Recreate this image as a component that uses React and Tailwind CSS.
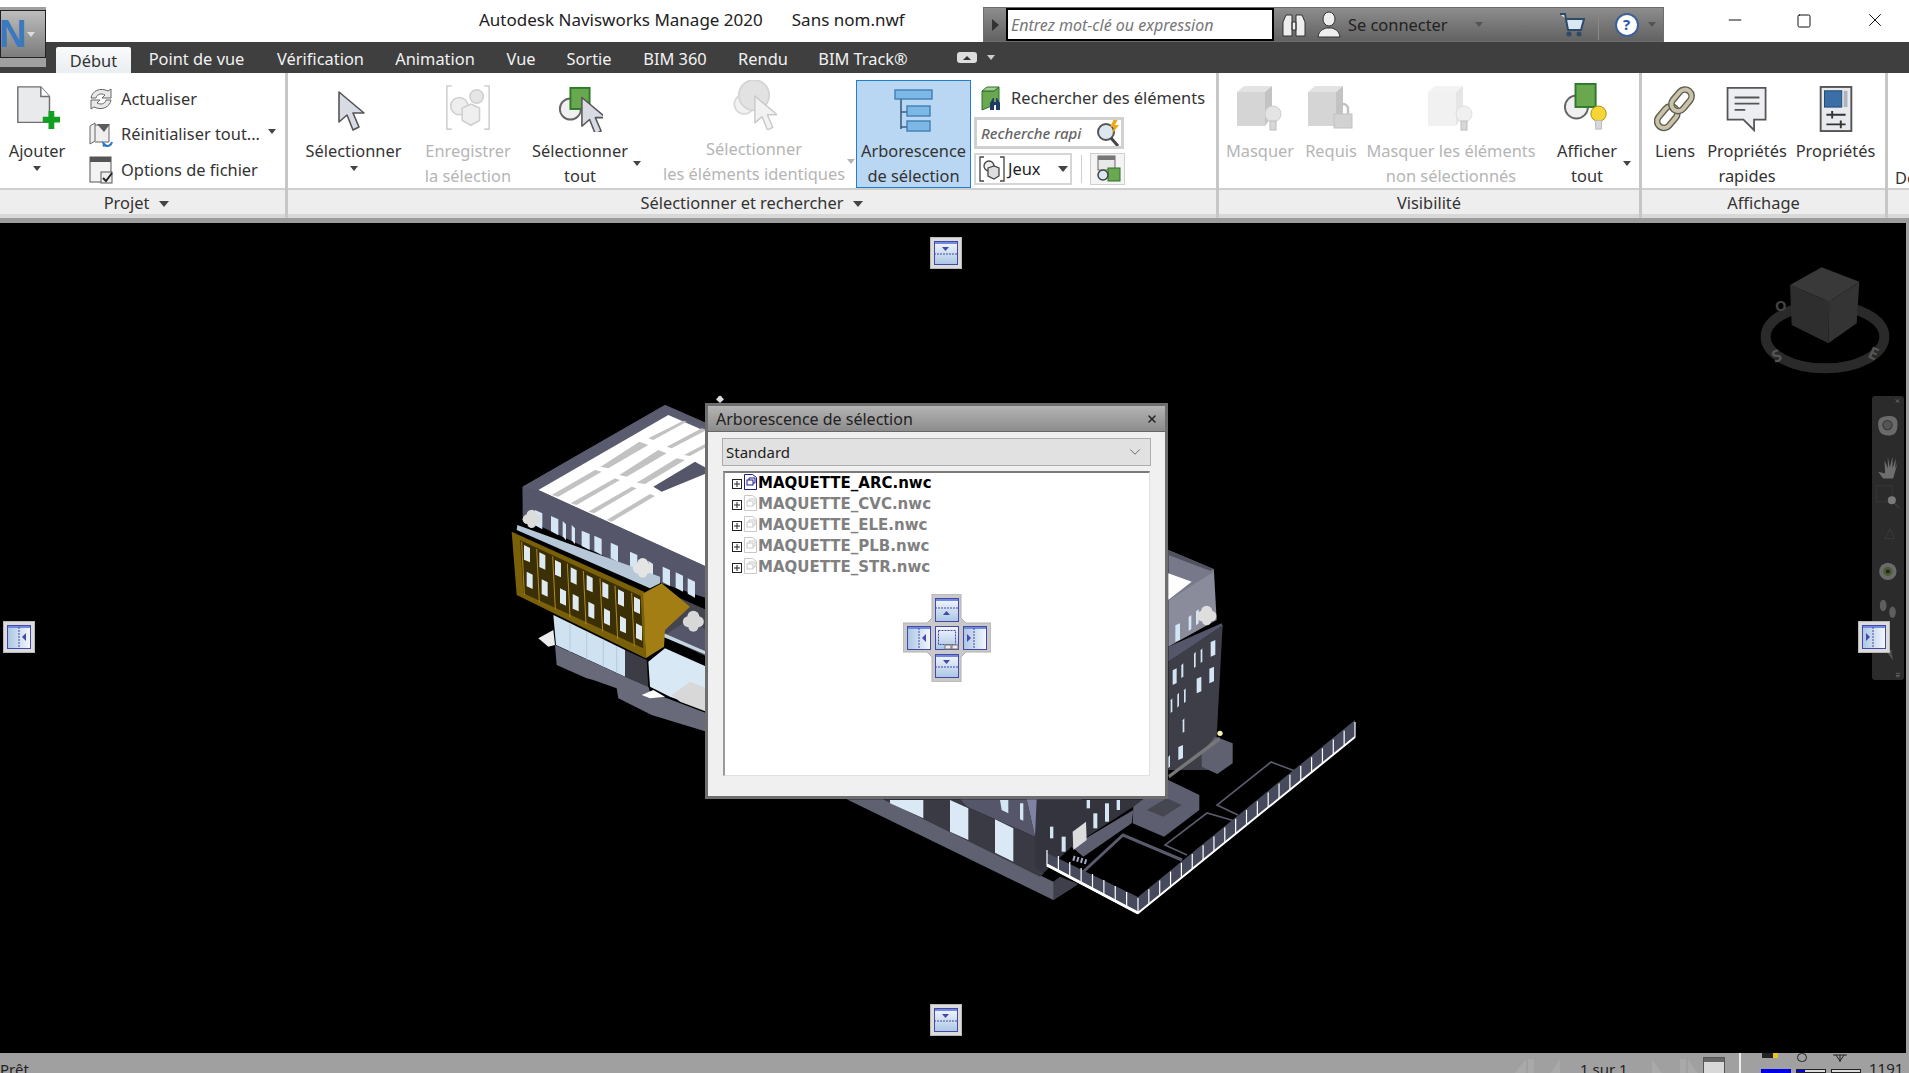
import { Minus, Square, X, ChevronDown } from "lucide-react";

const P = ({ p, f, s, w }) => <polygon points={p} fill={f} stroke={s} strokeWidth={w} />;
const Tri = ({ className = "" }) => (
  <span className={`inline-block w-0 h-0 border-l-[4px] border-r-[4px] border-t-[5px] border-l-transparent border-r-transparent border-t-[#444] ${className}`} />
);

/* ---------- ribbon icons ---------- */
const AddIcon = () => (
  <svg width="48" height="48" viewBox="0 0 48 50">
    <path d="M4 3h24l9 10v27H4z" fill="#e9eaec" stroke="#6f6f6f" strokeWidth="1.5" />
    <path d="M28 3v10h9" fill="#fff" stroke="#6f6f6f" strokeWidth="1.5" />
    <path d="M30 34h6v-6h6v6h6v6h-6v7h-6v-7h-6z" fill="#12a020" />
  </svg>
);
const Cursor = ({ fill = "#d9dbe4", stroke = "#555" }) => (
  <path d="M0 0l0 30 8-7 6 15 6-3-6-14 11 0z" fill={fill} stroke={stroke} strokeWidth="1.6" strokeLinejoin="round" />
);
const SelectIcon = () => (
  <svg width="32" height="41" viewBox="-1 -1 32 41"><Cursor /></svg>
);
const SaveSelIcon = () => (
  <svg width="48" height="48" viewBox="0 0 48 50" fill="none" stroke="#cfcfcf" strokeWidth="1.6">
    <path d="M7 2H2v45h5M41 2h5v45h-5" />
    <circle cx="15" cy="23" r="9" fill="#eee" />
    <circle cx="33" cy="13" r="7" fill="#e5e5e5" />
    <path d="M18 25l9-4 9 4v13l-9 5-9-5z" fill="#efefef" />
  </svg>
);
const SelectAllIcon = () => (
  <svg width="46" height="46" viewBox="0 0 46 48">
    <circle cx="13" cy="24" r="11" fill="#f0f0f0" stroke="#666" strokeWidth="2" />
    <rect x="13" y="2" width="20" height="22" fill="#69a84f" stroke="#2f7a2a" strokeWidth="2" />
    <g transform="translate(25 12)"><Cursor /></g>
  </svg>
);
const SimilarIcon = () => (
  <svg width="46" height="50" viewBox="0 0 50 56">
    <circle cx="14" cy="27" r="11" fill="#f2f2f2" stroke="#d9d9d9" strokeWidth="2" />
    <circle cx="25" cy="17" r="17" fill="#e2e2e2" stroke="#d4d4d4" strokeWidth="2" />
    <g transform="translate(26 18)"><Cursor fill="#f2f2f2" stroke="#c9c9c9" /></g>
  </svg>
);
const TreeIcon = () => (
  <svg width="40" height="44" viewBox="0 0 40 44">
    <path d="M7 10v31M7 24h8M7 39h8" fill="none" stroke="#3c5f80" strokeWidth="1.6" />
    <rect x="1" y="2" width="37" height="9" fill="#7db7e6" stroke="#3f7fb5" strokeWidth="1.4" />
    <rect x="13" y="18" width="23" height="10" fill="#7db7e6" stroke="#3f7fb5" strokeWidth="1.4" />
    <rect x="13" y="33" width="23" height="10" fill="#7db7e6" stroke="#3f7fb5" strokeWidth="1.4" />
  </svg>
);
const FindItemsIcon = () => (
  <svg width="24" height="26" viewBox="0 0 24 26">
    <path d="M2 5h12l5-4v16l-17 7z" fill="#6aa84f" stroke="#2f6f2f" />
    <path d="M2 5l5-4h12l-5 4z" fill="#a4d08e" stroke="#2f6f2f" />
    <path d="M10 24v-7l3-5h1v4h2v-4h1l3 5v7h-4v-5h-2v5z" fill="#1f3b66" />
  </svg>
);
const QuickSearchIcon = () => (
  <svg width="26" height="30" viewBox="0 0 26 30">
    <circle cx="11" cy="14" r="8" fill="#dbe8f2" stroke="#555" strokeWidth="2" />
    <path d="M16 20l7 8" stroke="#444" strokeWidth="3" />
    <path d="M19 1l-4 8h4l-2 7 7-9h-4l3-6z" fill="#f0a818" />
  </svg>
);
const JeuxIcon = () => (
  <svg width="26" height="28" viewBox="0 0 26 28" fill="none" stroke="#444" strokeWidth="1.3">
    <path d="M5 2H1v24h4M21 2h4v24h-4" />
    <circle cx="10" cy="11" r="5" fill="#eee" />
    <path d="M9 13l6-2 5 2v8l-5 3-6-3z" fill="#ddd" />
  </svg>
);
const SetsIcon = () => (
  <svg width="26" height="28" viewBox="0 0 26 28">
    <rect x="3" y="1" width="17" height="14" fill="#e8e8e8" stroke="#666" />
    <rect x="3" y="1" width="17" height="4" fill="#777" />
    <rect x="13" y="13" width="12" height="13" fill="#6aa84f" stroke="#2f6f2f" />
    <circle cx="8" cy="20" r="5" fill="#dbe8f2" stroke="#444" strokeWidth="1.5" />
  </svg>
);
const Bulb = ({ x, y, c = "#e4e4e4", s = "#cfcfcf" }) => (
  <g transform={`translate(${x} ${y})`}>
    <circle cx="8" cy="8" r="8" fill={c} stroke={s} />
    <rect x="5" y="15" width="6" height="9" fill="#d8d8d8" stroke="#bbb" />
  </g>
);
const Cube = ({ top = "#e3e3e3", front = "#d5d5d5", side = "#c3c3c3" }) => (
  <g>
    <path d="M2 8l7-6h28l-7 6z" fill={top} />
    <rect x="2" y="8" width="28" height="34" fill={front} />
    <path d="M30 8l7-6v30l-7 10z" fill={side} />
  </g>
);
const HideIcon = () => (
  <svg width="50" height="48" viewBox="0 0 50 48"><Cube /><Bulb x={30} y={22} /></svg>
);
const RequiredIcon = () => (
  <svg width="50" height="48" viewBox="0 0 50 48">
    <Cube />
    <path d="M32 30v-5a5 5 0 0110 0v5" fill="none" stroke="#c2c2c2" strokeWidth="2.5" />
    <rect x="28" y="30" width="18" height="14" fill="#d2d2d2" stroke="#c2c2c2" />
  </svg>
);
const HideOthersIcon = () => (
  <svg width="50" height="48" viewBox="0 0 50 48"><Cube top="#f3f3f3" front="#f1f1f1" side="#e6e6e6" /><Bulb x={30} y={22} c="#f0f0f0" s="#e0e0e0" /></svg>
);
const ShowAllIcon = () => (
  <svg width="48" height="50" viewBox="0 0 50 52">
    <circle cx="14" cy="26" r="12" fill="#f0f0f0" stroke="#666" strokeWidth="2" />
    <rect x="13" y="2" width="21" height="24" fill="#69a84f" stroke="#2f7a2a" strokeWidth="2" />
    <Bulb x={29} y={25} c="#f6d637" s="#a88b10" />
  </svg>
);
const LinkRing = ({ y }) => (
  <g>
    <rect x="13" y={y} width="14" height="25" rx="7" fill="none" stroke="#5f5f55" strokeWidth="7" />
    <rect x="13" y={y} width="14" height="25" rx="7" fill="none" stroke="#cbc3a8" strokeWidth="4" />
  </g>
);
const LinkIcon = () => (
  <svg width="42" height="48" viewBox="0 0 40 50">
    <g transform="rotate(40 20 25)">
      <LinkRing y={25} />
      <LinkRing y={2} />
    </g>
  </svg>
);
const QuickPropsIcon = () => (
  <svg width="46" height="46" viewBox="0 0 48 52">
    <path d="M2 2h43v36H32v12L20 38H2z" fill="#eceef1" stroke="#555" strokeWidth="2" />
    <path d="M10 13h28M10 20h28M10 27h12" stroke="#555" strokeWidth="2" />
  </svg>
);
const PropsIcon = () => (
  <svg width="34" height="46" viewBox="0 0 34 48">
    <rect x="1" y="1" width="32" height="46" fill="#e8eaee" stroke="#555" strokeWidth="2" />
    <rect x="5" y="5" width="18" height="17" fill="#3c6ea8" stroke="#23466f" />
    <rect x="25" y="5" width="4" height="17" fill="#aeb4bd" />
    <path d="M7 30h20M7 40h20M13 26v8M22 36v8" stroke="#333" strokeWidth="2" />
  </svg>
);
const RefreshIcon = () => (
  <svg width="26" height="26" viewBox="0 0 26 26" fill="#e8e8e8" stroke="#666">
    <path d="M3 12C4 5 12 1 20 5l3-2v9h-9l3-3c-4-2-8-1-9 3z" />
    <path d="M23 14c-1 7-9 11-17 7l-3 2v-9h9l-3 3c4 2 8 1 9-3z" />
  </svg>
);
const ResetIcon = () => (
  <svg width="26" height="30" viewBox="0 0 26 30">
    <path d="M2 6l5-3v18l-5 3zM7 5h14v17H7" fill="#efefef" stroke="#666" />
    <path d="M9 4h13l-6 8z" fill="#5b5b5b" />
    <path d="M24 22a5 5 0 01-8 3" fill="none" stroke="#2d78c4" strokeWidth="2" />
    <path d="M14 21l1 6 4-2z" fill="#2d78c4" />
  </svg>
);
const OptionsIcon = () => (
  <svg width="26" height="30" viewBox="0 0 26 30">
    <rect x="2" y="2" width="21" height="25" fill="#f3f3f3" stroke="#555" />
    <rect x="2" y="2" width="21" height="5" fill="#555" />
    <rect x="13" y="17" width="11" height="11" fill="#eee" stroke="#555" />
    <path d="M15 23l3 3 6-8" fill="none" stroke="#222" strokeWidth="2" />
  </svg>
);

/* ---------- dock glyphs ---------- */
const DockGlyph = ({ dir, x = 0, y = 0 }) => {
  const marks = {
    up: <><path d="M0 10h23" stroke="#4747a8" strokeDasharray="2 1" /><path d="M8 17l3.5-4 3.5 4z" fill="#4747a8" /></>,
    down: <><path d="M0 13h23" stroke="#4747a8" strokeDasharray="2 1" /><path d="M8 6l3.5 4 3.5-4z" fill="#4747a8" /></>,
    left: <><path d="M12 2v20" stroke="#4747a8" strokeDasharray="2 1" /><path d="M19 8l-4 4 4 4z" fill="#4747a8" /></>,
    right: <><path d="M11 2v20" stroke="#4747a8" strokeDasharray="2 1" /><path d="M4 8l4 4-4 4z" fill="#4747a8" /></>,
  };
  return (
    <g transform={`translate(${x} ${y})`}>
      <rect x=".5" y=".5" width="23" height="23" fill={dir === "up" || dir === "down" ? "url(#dockv)" : "url(#dockh)"} stroke="#4747a8" />
      <rect x="1" y="1" width="22" height="2" fill="#6f8be0" />
      {marks[dir]}
    </g>
  );
};
const DockButton = ({ dir, className }) => (
  <div className={`absolute w-[32px] h-[32px] bg-[#dcdcdc] border border-[#b8b8b8] flex items-center justify-center ${className}`}>
    <svg width="24" height="24"><DockGlyph dir={dir} /></svg>
  </div>
);
const DockCross = () => (
  <svg className="absolute left-[178px] top-[121px]" width="88" height="88" viewBox="0 0 88 88">
    <path d="M29 0h29v24l5 5h25v29H63l-5 5v25H29V63l-5-5H0V29h24l5-5z" fill="#c9c9c9" stroke="#b0b0b0" />
    <DockGlyph dir="up" x={32} y={4} />
    <DockGlyph dir="left" x={4} y={32} />
    <DockGlyph dir="right" x={60} y={32} />
    <DockGlyph dir="down" x={32} y={60} />
    <rect x="32.5" y="32.5" width="23" height="23" fill="url(#dockv)" stroke="#4747a8" />
    <rect x="35.5" y="36.5" width="17" height="14" fill="none" stroke="#4747a8" strokeDasharray="2 1" />
    <rect x="42" y="51" width="6" height="4" fill="#eee" stroke="#777" />
    <rect x="49" y="51" width="6" height="4" fill="#eee" stroke="#777" />
  </svg>
);

/* ---------- 3d model ---------- */
const skylights = [
  "215,315 345,240 365,245 235,320", "272,340 405,265 420,270 290,345", "325,365 455,290 470,295 342,370",
  "380,390 510,312 525,318 395,395", "362,230 478,155 505,165 385,235", "418,255 535,180 560,190 440,260",
  "470,278 590,205 615,210 495,282", "505,145 610,92 620,95 520,150", "560,170 665,115 680,120 575,175",
  "612,195 680,160 680,170 630,198",
];
const wallWindows = [[165,360,22],[213,378,22],[248,393,10],[275,405,10],[305,422,24],[343,437,22],[392,458,22],[450,485,22],[505,512,14],[548,530,22],[587,547,22],[623,565,22]];
const goldWindows = [[132,465],[178,487],[225,510],[272,532],[320,555],[367,575],[414,598],[462,620],[140,545],[185,568],[240,595],[278,612],[325,635],[372,655],[420,678],[468,700]];
const sideWindows = [[182,330,14,50],[178,410,14,50],[140,440,14,50],[68,415,12,50],[94,400,6,45],[152,355,5,45],[132,365,5,50],[102,475,5,45],[82,488,5,45],[62,505,5,45],[98,565,5,45],[85,645,14,45],[55,675,5,40],[76,280,14,55],[116,255,8,48],[138,238,8,48]];

const Shrub = ({ x, y, r = 20, c = "#e0e0e0" }) => (
  <g fill={c}>
    <circle cx={x} cy={y - r * 0.5} r={r * 0.6} />
    <circle cx={x - r * 0.5} cy={y} r={r * 0.55} />
    <circle cx={x + r * 0.5} cy={y} r={r * 0.55} />
    <circle cx={x} cy={y + r * 0.5} r={r * 0.5} />
  </g>
);

function fencePosts() {
  const posts = [];
  for (let i = 0; i <= 8; i++) {
    const t = i / 8;
    posts.push([1047 + 91 * t, 865 + 48 * t]);
  }
  for (let i = 1; i <= 20; i++) {
    const t = i / 20;
    posts.push([1138 + 217 * t, 913 - 176 * t]);
  }
  return posts;
}

const Model = () => (
  <svg className="absolute left-0 top-0" width="1909" height="830" viewBox="0 223 1909 830">
    <defs>
      <linearGradient id="dockv" x1="0" y1="0" x2="0" y2="1"><stop offset="0" stopColor="#f4f7fd" /><stop offset="1" stopColor="#aac6e4" /></linearGradient>
      <linearGradient id="dockh" x1="0" y1="0" x2="1" y2="0"><stop offset="0" stopColor="#aac6e4" /><stop offset="1" stopColor="#f4f7fd" /></linearGradient>
    </defs>
    {/* left wing */}
    <g transform="translate(480 390) scale(.33333)">
      <P p="128,290 555,45 680,100 680,540 128,380" f="#5e5f72" />
      <P p="555,45 680,100 680,110 565,75 175,300 128,290" f="#5a5b6e" />
      <P p="175,300 565,75 680,125 680,530" f="#fff" />
      {skylights.map((p) => <P key={p} p={p} f="#c2c2c2" />)}
      <P p="520,290 645,215 680,235 680,250 545,305" f="#55566a" />
      <P p="128,290 175,300 680,530 680,625 545,580 130,385" f="#55566a" />
      {wallWindows.map(([x, y, w]) => <P key={x} p={`${x},${y} ${x + w},${y + 10} ${x + w},${y + 58} ${x},${y + 46}`} f="#d4e6f3" />)}
      <P p="545,600 680,660 680,800 555,740" f="#44454f" />
      <P p="220,675 435,780 435,860 228,765" f="#cfe2f2" />
      {[270, 320, 370, 410].map((x) => <path key={x} d={`M${x} ${700 + (x - 270) * 0.49}v88`} stroke="#b5cbdd" strokeWidth="3" />)}
      <P p="435,780 500,810 505,890 435,860" f="#3c3c46" />
      <P p="225,765 435,860 505,890 510,905 680,970 680,1025 515,975 415,925 410,895 340,870 320,865 230,825" f="#686a7a" />
      <P p="175,745 220,720 225,765 205,770" f="#ececec" />
      <P p="505,815 555,775 680,830 680,960 570,920 510,890" f="#d8e8f5" />
      <P p="555,735 625,690 680,720 680,795 555,740" f="#55566a" />
      <P p="552,730 680,785 680,795 552,742" f="#c5d5e0" />
      <P p="485,915 520,900 555,920 510,925" f="#fff" />
      <P p="575,915 630,875 680,895 680,965 600,935" f="#d8d8d8" />
      <P p="112,405 540,560 540,580 510,595 110,420" f="#b6c8d8" />
      <P p="95,425 492,605 497,805 110,615" f="#7a6008" />
      <P p="120,450 482,618 490,775 130,610" f="#3b2f06" />
      {goldWindows.map(([x, y]) => <P key={`${x}-${y}`} p={`${x},${y} ${x + 18},${y + 9} ${x + 18},${y + 52} ${x},${y + 44}`} f="#dfe9f0" />)}
      {[125, 170, 218, 262, 310, 360, 405, 455].map((x, i) => <path key={x} d={`M${x} ${455 + i * 22}l8 ${160}`} stroke="#b08a18" strokeWidth="3" />)}
      <P p="490,610 545,580 630,650 555,720 552,770 497,805" f="#a37e14" />
      <Shrub x={155} y={388} r={26} c="#dcdcdc" />
      <Shrub x={488} y={535} r={28} c="#e4e4e4" />
      <Shrub x={640} y={695} r={30} c="#d8d8d8" />
      <Shrub x={720} y={28} r={10} c="#ddd" />
    </g>
    {/* right wing */}
    <g transform="translate(1150 530) scale(.33333)">
      <P p="55,60 192,118 192,130 55,210" f="#77798a" />
      <P p="55,60 192,118 180,122 55,75" f="#50525f" />
      <P p="55,130 125,155 55,210" f="#fff" />
      <P p="55,210 192,125 200,270 55,350" f="#8a8b9b" />
      <P p="55,350 215,280 218,290 55,395" f="#55566a" />
      <P p="55,395 218,285 200,620 245,640 245,680 180,720 55,720" f="#3d3e48" />
      {sideWindows.map(([x, y, w, h]) => <P key={`${x}-${y}`} p={`${x},${y + 6} ${x + w},${y} ${x + w},${y + h - 6} ${x},${y + h}`} f="#d4e6f3" />)}
      <Shrub x={170} y={258} r={28} c="#dedede" />
      <circle cx="210" cy="610" r="8" fill="#f5efb5" />
    </g>
    {/* lower block */}
    <g transform="translate(840 780) scale(.33333)">
      <P p="130,58 640,305 710,315 640,360 20,58" f="#5f6070" />
      <P p="640,360 640,305 660,290 715,312" f="#3e3f4b" />
      <P p="130,58 360,58 380,80 585,170 612,280 600,290" f="#3a3a44" />
      <P p="360,58 560,58 585,170 380,80" f="#55566a" />
      <P p="150,60 250,60 250,115 150,70" f="#dbe8f5" />
      <P p="330,60 385,85 385,180 330,155" f="#dbe8f5" />
      <P p="465,118 520,145 520,245 465,218" f="#dbe8f5" />
      <P p="480,60 505,60 505,100 485,90" f="#d4e6f3" />
      <P p="540,70 550,70 550,122 540,118" f="#d4e6f3" />
      <P p="560,58 725,58 600,170 585,170" f="#7f82a0" />
      {[600, 620, 640, 665].map((x) => <rect key={x} x={x} y="60" width="8" height="50" fill="#e8eef5" />)}
    </g>
    <g transform="translate(880 700) scale(.33333)">
      <P p="465,410 470,298 800,298 760,320 575,440 490,520 465,500" f="#33343d" />
      <P p="575,440 760,330 755,370 610,470" f="#5d5e6f" />
      <P p="760,320 865,240 958,285 958,330 852,410 758,370" f="#5d5e6f" />
      <P p="800,330 860,295 905,315 850,350" f="#45464f" />
      <P p="965,160 1005,110 1058,130 1058,190 1012,222 965,200" f="#5f6070" />
      <P p="865,225 1018,110 1020,122 868,235" f="#777" />
      {[[545,410,12,45],[510,380,10,35],[640,340,12,45],[675,310,12,55],[710,300,10,30],[620,300,10,25]].map(([x, y, w, h]) => <rect key={x} x={x} y={y} width={w} height={h} fill="#d4e6f3" />)}
      <P p="578,395 618,365 620,420 580,450" f="#dcdcdc" />
    </g>
    {/* outlines in the courtyard */}
    <g fill="none" stroke="#5a5b6c" strokeWidth="1.6">
      <path d="M1083 872l40-37 59 25" strokeWidth="3" />
      <path d="M1187 855l-22-10 42-32 31 9" />
      <path d="M1238 815l-21-10 54-43 24 9" />
    </g>
    {/* fence */}
    <P p="1047,853 1138,897 1355,720 1355,737 1138,913 1047,865" f="#474a5c" />
    <path d="M1047 865l91 48 217-176" fill="none" stroke="#fff" strokeWidth="2" />
    <path d="M1047 865l91 48" fill="none" stroke="#fff" strokeWidth="3" />
    {fencePosts().map(([x, y]) => <path key={x} d={`M${x} ${y}v-15`} stroke="#fff" strokeWidth="1.2" />)}
    <path d="M1073 858l14 4" stroke="#a6a9c8" strokeWidth="5" strokeDasharray="2 2" fill="none" />
    {/* view cube */}
    <g transform="translate(1740 240) scale(.33333)">
      <ellipse cx="255" cy="290" rx="178" ry="95" fill="none" stroke="#2a2a2a" strokeWidth="30" />
      <P p="150,135 245,82 358,125 268,185" f="#393939" />
      <P p="150,135 268,185 265,310 155,255" f="#2e2e2e" />
      <P p="268,185 358,125 350,250 265,310" f="#343434" />
      <text x="105" y="370" fontSize="50" fontWeight="700" fill="#555" transform="rotate(-25 105 370)">S</text>
      <text x="380" y="350" fontSize="50" fontWeight="700" fill="#555" transform="rotate(25 380 350)">E</text>
      <text x="105" y="212" fontSize="44" fontWeight="700" fill="#444">O</text>
    </g>
  </svg>
);

const NavBar = () => (
  <div className="absolute left-[1872px] top-[173px] w-[32px] h-[284px] rounded-[3px] bg-[#2b2b2b]">
    <svg width="32" height="284" viewBox="397 468 95 850">
      <path d="M415 550c0-15 10-20 30-22 20 0 28 5 28 25 0 25-10 33-28 33-20 0-30-10-30-36z" fill="#6a6a6a" />
      <circle cx="443" cy="555" r="14" fill="#555" stroke="#333" strokeWidth="3" />
      <path d="M415 695l15 20h30l14-50-8 20 2-30-10 30v-35l-8 32-6-32v35l-10-25 2 40z" fill="#6e6e6e" />
      <rect x="409" y="737" width="48" height="48" fill="none" stroke="#3c3c3c" strokeWidth="2" />
      <circle cx="456" cy="780" r="12" fill="#7a7a7a" />
      <path d="M465 790l14 14" stroke="#444" strokeWidth="3" />
      <path d="M450 865l-14 30h28z" fill="none" stroke="#404040" strokeWidth="2" />
      <circle cx="444" cy="993" r="26" fill="#6a6a6a" />
      <circle cx="444" cy="993" r="14" fill="#4f5b35" />
      <circle cx="444" cy="993" r="6" fill="#222" />
      <ellipse cx="430" cy="1095" rx="10" ry="17" fill="#5e5e5e" />
      <ellipse cx="458" cy="1115" rx="10" ry="17" fill="#5e5e5e" />
      <path d="M430 1220l30 40-6-28 8 0z" fill="#555" />
      <path d="M468 478l10 10M478 478l-10 10" stroke="#888" strokeWidth="2" />
      <path d="M468 1298h12M468 1304h12M474 1310l-5-4h10z" stroke="#777" strokeWidth="2" />
    </svg>
  </div>
);

/* ---------- ribbon ---------- */
function Large({ w, icon, lines, disabled, arrow, caret, iconH = 65, className = "" }) {
  return (
    <div className={`relative shrink-0 flex flex-col items-center ${className}`} style={{ width: w }}>
      <div className="shrink-0 flex items-end justify-center pb-[6px]" style={{ height: iconH }}>{icon}</div>
      {lines.map((line) => (
        <div key={line} className={`shrink-0 h-[25px] leading-[25px] whitespace-nowrap ${disabled ? "text-[#b5b5b5]" : "text-[#333]"}`}>{line}</div>
      ))}
      {caret && <Tri className="mt-[3px]" />}
      {arrow && <Tri className="absolute top-[88px] right-[2px]" />}
    </div>
  );
}

function Panel({ w, title, arrow, pr = 0, children }) {
  return (
    <div className="shrink-0 flex flex-col border-r-[3px] border-[#c6c6c6]" style={{ width: w }}>
      <div className="flex h-[115px]">{children}</div>
      <div className="h-[2px] bg-[#cfcfcf]" />
      <div className="h-[24px] pt-[3px] bg-[#eeeeee] flex items-center justify-center gap-[10px] text-[#333]" style={{ paddingRight: pr }}>
        {title}
        {arrow && <Tri className="border-t-[6px] border-l-[5px] border-r-[5px]" />}
      </div>
      <div className="h-[4px] bg-[#d8d8d8]" />
    </div>
  );
}

const SmallRow = ({ icon, label, arrow }) => (
  <div className="h-[36px] flex items-center gap-[7px] text-[#333] whitespace-nowrap">
    <span className="w-[26px] flex justify-center">{icon}</span>
    {label}
    {arrow && <Tri className="ml-[1px] -mt-[6px]" />}
  </div>
);

function Ribbon() {
  return (
    <div className="h-[145px] bg-white flex overflow-hidden text-[16.4px]">
      <Panel w={288} title="Projet" arrow pr={12}>
        <Large w={74} icon={<AddIcon />} lines={["Ajouter"]} caret />
        <div className="ml-[14px] pt-[8px] flex flex-col">
          <SmallRow icon={<RefreshIcon />} label="Actualiser" />
          <SmallRow icon={<ResetIcon />} label="Réinitialiser tout..." arrow />
          <SmallRow icon={<OptionsIcon />} label="Options de fichier" />
        </div>
      </Panel>
      <Panel w={931} title="Sélectionner et rechercher" arrow>
        <Large w={131} icon={<SelectIcon />} lines={["Sélectionner"]} caret />
        <Large w={98} icon={<SaveSelIcon />} lines={["Enregistrer", "la sélection"]} disabled />
        <Large w={126} icon={<SelectAllIcon />} lines={["Sélectionner", "tout"]} arrow />
        <div className="relative w-[213px] shrink-0 pl-[9px]">
          <Large w={204} icon={<SimilarIcon />} lines={["Sélectionner", "les éléments identiques"]} disabled iconH={63} />
          <Tri className="absolute top-[86px] right-[1px] opacity-40" />
        </div>
        <div className="shrink-0 w-[115px] h-[108px] mt-[7px] bg-[#b9d7f2] border border-[#1e7fd0] flex flex-col items-center">
          <div className="h-[57px] shrink-0 flex items-end pb-[6px]"><TreeIcon /></div>
          <div className="h-[25px] shrink-0 leading-[25px] whitespace-nowrap text-[#333]">Arborescence</div>
          <div className="h-[25px] shrink-0 leading-[25px] whitespace-nowrap text-[#333]">de sélection</div>
        </div>
        <div className="ml-[3px] shrink-0 flex flex-col">
          <div className="h-[44px] pt-[7px] pl-[6px] flex items-center gap-[7px] text-[#333] whitespace-nowrap"><FindItemsIcon />Rechercher des éléments</div>
          <div className="w-[150px] h-[32px] border-[3px] border-[#d0d0d0] flex items-center justify-between pl-[4px] overflow-hidden">
            <span className="italic font-medium text-[15px] text-[#666] whitespace-nowrap overflow-hidden w-[101px]">Recherche rapide</span>
            <QuickSearchIcon />
          </div>
          <div className="mt-[4px] flex items-center">
            <div className="w-[98px] h-[32px] border-[2px] border-[#d6d6d6] flex items-center pl-[3px] gap-[3px] text-[#222]">
              <JeuxIcon />Jeux<Tri className="ml-[14px] border-t-[6px] border-l-[5px] border-r-[5px]" />
            </div>
            <div className="w-px h-[28px] ml-[9px] mr-[8px] bg-[#d0d0d0]" />
            <div className="w-[35px] h-[32px] border border-[#d0d0d0] bg-[#f4f4f4] flex items-center justify-center"><SetsIcon /></div>
          </div>
        </div>
      </Panel>
      <Panel w={423} title="Visibilité">
        <Large w={82} icon={<HideIcon />} lines={["Masquer"]} disabled />
        <Large w={60} icon={<RequiredIcon />} lines={["Requis"]} disabled />
        <Large w={180} icon={<HideOthersIcon />} lines={["Masquer les éléments", "non sélectionnés"]} disabled />
        <Large w={92} icon={<ShowAllIcon />} lines={["Afficher", "tout"]} arrow />
      </Panel>
      <Panel w={246} title="Affichage">
        <Large w={66} icon={<LinkIcon />} lines={["Liens"]} />
        <Large w={78} icon={<QuickPropsIcon />} lines={["Propriétés", "rapides"]} />
        <Large w={99} icon={<PropsIcon />} lines={["Propriétés"]} />
      </Panel>
      <div className="flex-1 flex flex-col">
        <div className="h-[115px] pl-[7px] pt-[12px] overflow-hidden text-[#333] leading-[25px]">
          <svg className="block ml-[13px]" width="8" height="48" viewBox="0 0 8 48"><path d="M7 2C2 4 1 10 4 16M4 30C1 36 2 42 7 46" fill="none" stroke="#777" strokeWidth="2" /></svg>
          <div className="mt-[32px]">De</div>
        </div>
        <div className="h-[2px] bg-[#cfcfcf]" />
        <div className="h-[24px] bg-[#eeeeee]" />
        <div className="h-[4px] bg-[#d8d8d8]" />
      </div>
    </div>
  );
}

const tabs = [["Point de vue", 131], ["Vérification", 117], ["Animation", 112], ["Vue", 60], ["Sortie", 76], ["BIM 360", 96], ["Rendu", 80], ["BIM Track®", 120]];

function TitleBar() {
  return (
    <div className="relative h-[42px] bg-white flex text-[16px] text-[#222]">
      <div className="ml-[479px] pt-[7px] text-[17px] whitespace-nowrap">Autodesk Navisworks Manage 2020</div>
      <div className="ml-[29px] pt-[7px] text-[17px] whitespace-nowrap">Sans nom.nwf</div>
      <div className="absolute left-[983px] top-[7px] w-[681px] h-[35px] bg-linear-to-b from-[#8d8d8d] to-[#626262] border border-[#6d6d6d] flex items-center">
        <div className="w-[22px] flex justify-center"><span className="w-0 h-0 border-y-[6px] border-y-transparent border-l-[7px] border-l-[#333]" /></div>
        <div className="w-[268px] h-[33px] bg-white border-[2px] border-black flex items-center pl-[3px] italic text-[16px] text-[#777] whitespace-nowrap">Entrez mot-clé ou expression</div>
        <svg className="ml-[7px]" width="26" height="26" viewBox="0 0 26 26"><path d="M2 24V10l3-7h6v21zM24 24V10l-3-7h-6v21zM11 10h4v8h-4z" fill="#eee" stroke="#333" /></svg>
        <svg className="ml-[10px]" width="24" height="28" viewBox="0 0 24 28"><ellipse cx="12" cy="8" rx="6" ry="7" fill="#eee" stroke="#333" /><path d="M1 26c1-7 6-8 8-9h6c2 1 7 2 8 9z" fill="#eee" stroke="#333" /></svg>
        <span className="ml-[7px] pt-[2px] text-[16.4px] text-[#222] whitespace-nowrap">Se connecter</span>
        <Tri className="ml-[27px] opacity-70" />
        <svg className="ml-[76px]" width="26" height="26" viewBox="0 0 26 26"><path d="M1 2h5l3 16h13l3-11H7" fill="#d8e8f2" stroke="#2e4a66" strokeWidth="2" /><circle cx="10" cy="22" r="2.5" fill="#2e4a66" /><circle cx="20" cy="22" r="2.5" fill="#2e4a66" /></svg>
        <div className="ml-[13px] w-px h-[30px] bg-[#888]" />
        <div className="ml-[16px] w-[24px] h-[24px] rounded-full bg-white border-[2px] border-[#3f5f9a] flex items-center justify-center text-[15px] font-bold text-[#2a55b0] leading-none">?</div>
        <Tri className="ml-[9px] opacity-70" />
      </div>
      <div className="absolute left-0 top-[7px] w-[46px] h-[60px] bg-[#a0a0a0] z-10 pt-[3px]">
        <div className="h-[48px] border border-[#222] bg-linear-to-b from-[#bdbdbd] to-[#7c7c7c] flex items-center overflow-hidden">
          <span className="text-[#3a78c0] font-bold text-[38px] leading-none -ml-[2px] font-['Liberation_Sans',sans-serif]">N</span>
          <Tri className="ml-[1px] border-t-[#ddd]" />
        </div>
      </div>
      <div className="absolute left-[1725px] top-[10px] text-[#111]"><Minus size={20} strokeWidth={1} absoluteStrokeWidth /></div>
      <div className="absolute left-[1796px] top-[13px] text-[#111]"><Square size={16} strokeWidth={1} absoluteStrokeWidth /></div>
      <div className="absolute left-[1864px] top-[9px] text-[#111]"><X size={22} strokeWidth={1} absoluteStrokeWidth /></div>
    </div>
  );
}

function TabBar() {
  return (
    <div className="h-[31px] bg-[#3f3f3f] flex pl-[56px] text-[16.4px] text-[#f2f2f2]">
      <div className="w-[75px] mt-[5px] h-[26px] pt-[2px] bg-linear-to-b from-[#fafafa] to-[#e9eef2] rounded-t-[2px] text-[#333] flex items-center justify-center">Début</div>
      {tabs.map(([name, w]) => (
        <div key={name} className="pt-[4px] flex items-center justify-center whitespace-nowrap" style={{ width: w }}>{name}</div>
      ))}
      <div className="ml-[34px] flex items-center gap-[10px]">
        <span className="w-[20px] h-[11px] bg-[#ddd] rounded-[3px] flex items-center justify-center"><span className="w-0 h-0 border-x-[4px] border-x-transparent border-b-[4px] border-b-[#333]" /></span>
        <Tri className="border-t-[#ccc]" />
      </div>
    </div>
  );
}

const treeRows = ["MAQUETTE_ARC.nwc", "MAQUETTE_CVC.nwc", "MAQUETTE_ELE.nwc", "MAQUETTE_PLB.nwc", "MAQUETTE_STR.nwc"];

function SelectionTree() {
  return (
    <div className="absolute left-[705px] top-[180px] w-[463px] h-[396px] bg-[#f0f0f0] border-[3px] border-[#6e6e6e] text-[#222]">
      <div className="h-[26px] bg-linear-to-b from-[#b4b4b4] to-[#8c8c8c] border-b border-[#666] flex items-center justify-between pl-[8px] pr-[7px] text-[16px] leading-none">
        <span>Arborescence de sélection</span>
        <X size={12} strokeWidth={3} />
      </div>
      <div className="mx-[14px] mt-[6px] w-[429px] h-[28px] bg-[#e1e1e1] border border-[#adadad] flex items-center justify-between pl-[3px] pr-[6px] text-[15px]">
        Standard
        <ChevronDown size={18} strokeWidth={1} className="text-[#444]" />
      </div>
      <div className="relative mx-[15px] mt-[5px] w-[427px] h-[305px] bg-white border-t-[2px] border-l-[2px] border-t-[#7a7a7a] border-l-[#9a9a9a] border-r border-b border-r-[#e0e0e0] border-b-[#e0e0e0]">
        {treeRows.map((name, index) => (
          <div key={name} className={`h-[21px] pl-[7px] flex items-center whitespace-nowrap font-['DejaVu_Sans',sans-serif] font-bold text-[15px] ${index === 0 ? "text-black" : "text-[#808080]"}`}>
            <svg width="10" height="10" viewBox="0 0 10 10" className="mr-[2px] mt-[1px] shrink-0"><rect x=".5" y=".5" width="9" height="9" fill="#fff" stroke="#222" /><path d="M2 5h6M5 2v6" stroke="#222" /></svg>
            <svg width="13" height="16" viewBox="0 0 13 16" className="mr-[1px] -mt-[4px] shrink-0" fill="none" stroke={index === 0 ? "#1b1b8c" : "#c8c8c8"}><path d="M.5.5h8l4 3v12H.5z" /><rect x="3" y="6" width="6" height="5" /><path d="M5 6V4h6v5H9" /></svg>
            <span>{name}</span>
          </div>
        ))}
        <DockCross />
      </div>
    </div>
  );
}

function StatusBar() {
  return (
    <div className="relative h-[20px] bg-[#a0a0a0] overflow-hidden text-[15px] text-[#222] leading-none">
      <span className="absolute left-0 top-[9px]">Prêt</span>
      <div className="absolute left-[1510px] top-[6px] flex items-start">
        <span className="w-[16px] h-[20px] bg-[#a9a9a9]" style={{ clipPath: "polygon(100% 0,100% 100%,0 100%)" }} />
        <span className="ml-[2px] w-[6px] h-[20px] bg-[#a9a9a9]" />
        <span className="ml-[12px] w-[14px] h-[20px] bg-[#a9a9a9]" style={{ clipPath: "polygon(100% 0,100% 100%,0 100%)" }} />
      </div>
      <span className="absolute left-[1580px] top-[9px] whitespace-nowrap">1 sur 1</span>
      <div className="absolute left-[1652px] top-[6px] flex items-start">
        <span className="w-[14px] h-[20px] bg-[#a9a9a9]" style={{ clipPath: "polygon(0 0,100% 100%,0 100%)" }} />
        <span className="ml-[14px] w-[6px] h-[20px] bg-[#a9a9a9]" />
        <span className="ml-[2px] w-[14px] h-[20px] bg-[#a9a9a9]" style={{ clipPath: "polygon(0 0,100% 100%,0 100%)" }} />
      </div>
      <div className="absolute left-[1703px] top-[4px] w-[22px] h-[18px] bg-[#d8d8d8] border border-[#555]"><div className="h-[4px] bg-[#666]" /></div>
      <div className="absolute left-[1739px] top-0 w-[2px] h-[20px] bg-[#eee]" />
      <div className="absolute left-[1762px] top-[0px] w-[16px] h-[5px] bg-[#222] border-r-[5px] border-[#e8c820]" />
      <div className="absolute left-[1761px] top-[16px] w-[30px] h-[4px] bg-[#0000e8]" />
      <div className="absolute left-[1797px] top-[0px] w-[10px] h-[9px] rounded-full border border-[#222]" />
      <div className="absolute left-[1796px] top-[16px] w-[30px] h-[4px] bg-[#dcdcdc] border border-[#222]"><div className="w-[8px] h-full bg-[#0000e8]" /></div>
      <svg className="absolute left-[1832px] top-0" width="16" height="10"><path d="M1 2h14M4 2l4 6 4-6M8 2v7" stroke="#222" fill="none" /></svg>
      <div className="absolute left-[1831px] top-[16px] w-[30px] h-[4px] bg-[#dcdcdc] border border-[#222]" />
      <span className="absolute left-[1869px] top-[8px]">1191</span>
    </div>
  );
}

export default function App() {
  return (
    <div className="h-screen w-full overflow-hidden bg-black font-['Noto_Sans',sans-serif]">
      <TitleBar />
      <TabBar />
      <Ribbon />
      <div className="h-[5px] bg-[#9c9c9c]" />
      <div className="relative h-[830px] bg-black overflow-hidden">
        <Model />
        <NavBar />
        <div className="absolute right-0 top-0 w-[3px] h-full bg-[#a0a0a0]" />
        <DockButton dir="down" className="left-[930px] top-[14px]" />
        <DockButton dir="down" className="left-[930px] top-[781px]" />
        <DockButton dir="left" className="left-[3px] top-[398px]" />
        <DockButton dir="right" className="left-[1858px] top-[398px]" />
        <SelectionTree />
      </div>
      <StatusBar />
    </div>
  );
}
